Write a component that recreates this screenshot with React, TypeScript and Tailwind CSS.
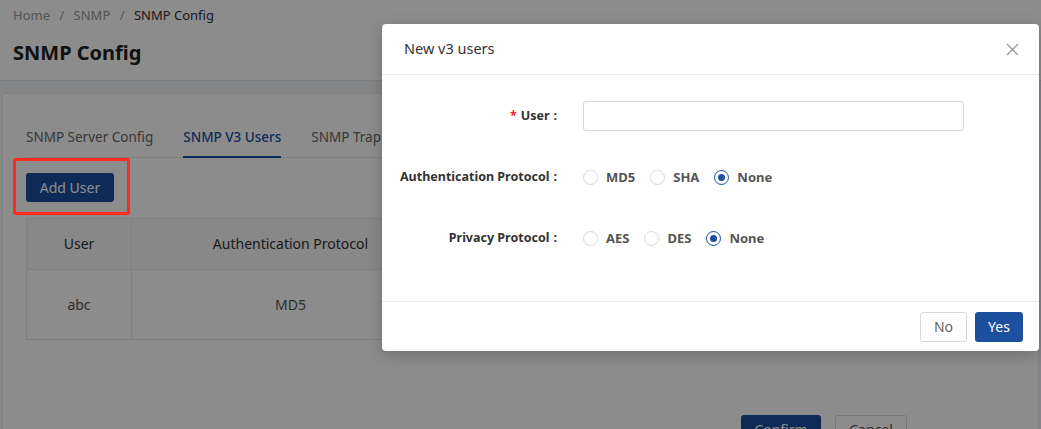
import React from "react";

type Option = { label: string; checked?: boolean };

const authOptions: Option[] = [{ label: "MD5" }, { label: "SHA" }, { label: "None", checked: true }];
const privacyOptions: Option[] = [{ label: "AES" }, { label: "DES" }, { label: "None", checked: true }];

function Radio({ label, checked }: Option) {
  return (
    <label className="flex items-center gap-2 mr-[15px] leading-5">
      {checked ? (
        <span className="w-[15px] h-[15px] rounded-full border border-[#1d4f9f] flex items-center justify-center">
          <span className="w-[7px] h-[7px] rounded-full bg-[#1d4f9f]" />
        </span>
      ) : (
        <span className="w-[15px] h-[15px] rounded-full border border-[#d9d9d9] bg-white" />
      )}
      <span className="text-[13px] font-bold text-[#555]">{label}</span>
    </label>
  );
}

function FormRow({ label, required, children }: { label: string; required?: boolean; children: React.ReactNode }) {
  return (
    <div className="flex items-center h-[30px]">
      <div className="w-[175px] text-right text-[12.5px] leading-5 font-bold text-[#333]">
        {required && <span className="text-[#f5222d] mr-1">*</span>}
        {label}
        <span className="ml-1">:</span>
      </div>
      <div className="ml-[26px] flex items-center">{children}</div>
    </div>
  );
}

export default function App() {
  return (
    <div className="relative w-[1041px] h-[429px] overflow-hidden bg-[#f0f2f5] font-['Noto_Sans',sans-serif]">
      <div className="bg-white h-[81px] border-b border-[#e5e5e5] px-[13px] pt-[5px]">
        <div className="text-[13px] leading-5 text-[#999]">
          Home <span className="mx-1.5">/</span> SNMP <span className="mx-1.5">/</span>{" "}
          <span className="text-[#333]">SNMP Config</span>
        </div>
        <h1 className="mt-[14px] text-xl leading-7 font-bold text-[#222]">SNMP Config</h1>
      </div>

      <div className="px-[2px] pt-[12px]">
        <div className="bg-white border border-[#e8e8e8] rounded-sm px-[23px] pt-[33px] h-[400px]">
          <div className="flex gap-[30px] border-b border-[#e8e8e8] text-[13.5px] leading-5">
            <div className="pb-[9px] text-[#666]">SNMP Server Config</div>
            <div className="pb-[9px] border-b-2 border-[#1d4f9f] -mb-px text-[#1d4f9f] font-medium">SNMP V3 Users</div>
            <div className="pb-[9px] text-[#666]">SNMP Trap</div>
          </div>

          <button className="mt-[15px] w-[88px] h-[29px] rounded-[3px] bg-[#1b4e9e] text-white text-sm">Add User</button>

          <table className="mt-[16px] border-collapse text-sm text-[#333]">
            <thead>
              <tr className="h-[51px] bg-[#f7f7f7]">
                <th className="w-[105px] border border-[#e8e8e8] font-normal">User</th>
                <th className="w-[318px] border border-[#e8e8e8] font-normal">Authentication Protocol</th>
              </tr>
            </thead>
            <tbody>
              <tr className="h-[70px] text-[#555]">
                <td className="border border-[#e8e8e8] text-center">abc</td>
                <td className="border border-[#e8e8e8] text-center">MD5</td>
              </tr>
            </tbody>
          </table>

          <div className="mt-[75px] pl-[715px] flex gap-[14px] text-sm">
            <button className="w-[80px] h-[30px] rounded-[3px] bg-[#1b4e9e] text-white">Confirm</button>
            <button className="w-[72px] h-[30px] rounded-[3px] border border-[#d9d9d9] text-[#555]">Cancel</button>
          </div>
        </div>
      </div>

      {/* mask */}
      <div className="absolute inset-0 bg-black/45 z-10" />

      {/* annotation */}
      <div className="absolute left-[13px] top-[158px] w-[117px] h-[57px] border-[3px] border-[#ff2a1a] rounded-[3px] z-20" />

      {/* modal */}
      <div className="absolute left-[382px] top-[24px] w-[657px] bg-white rounded shadow-[0_4px_16px_rgba(0,0,0,0.2)] z-30">
        <div className="h-[51px] border-b border-[#e8e8e8] flex items-center justify-between pl-[22px] pr-[20px]">
          <span className="text-[14.5px] text-[#333]">New v3 users</span>
          <svg width="13" height="13" viewBox="0 0 13 13" className="text-[#999]">
            <path d="M1 1L12 12M12 1L1 12" stroke="currentColor" strokeWidth="1.3" fill="none" />
          </svg>
        </div>

        <div className="pt-[26px] pb-[48px] flex flex-col gap-[31px]">
          <FormRow label="User" required>
            <input className="w-[381px] h-[30px] border border-[#d9d9d9] rounded-[3px] outline-none px-2 text-sm" />
          </FormRow>
          <FormRow label="Authentication Protocol">
            {authOptions.map((o) => (
              <Radio key={o.label} {...o} />
            ))}
          </FormRow>
          <FormRow label="Privacy Protocol">
            {privacyOptions.map((o) => (
              <Radio key={o.label} {...o} />
            ))}
          </FormRow>
        </div>

        <div className="border-t border-[#e8e8e8] flex justify-end gap-2 pt-[10px] pb-[9px] pr-[16px] text-sm">
          <button className="w-[47px] h-[30px] rounded-[3px] border border-[#d9d9d9] text-[#666]">No</button>
          <button className="w-[48px] h-[30px] rounded-[3px] bg-[#1d4f9f] text-white">Yes</button>
        </div>
      </div>
    </div>
  );
}
